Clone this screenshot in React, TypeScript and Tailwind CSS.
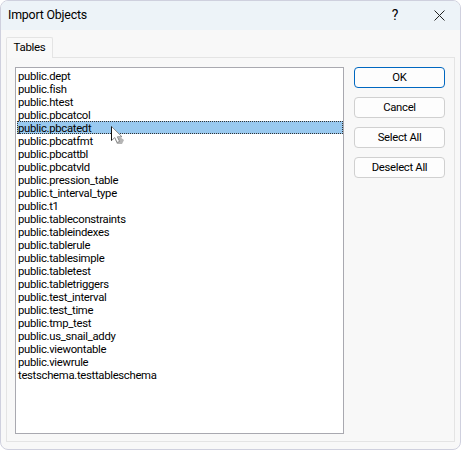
const tables = [
  'public.dept',
  'public.fish',
  'public.htest',
  'public.pbcatcol',
  'public.pbcatedt',
  'public.pbcatfmt',
  'public.pbcattbl',
  'public.pbcatvld',
  'public.pression_table',
  'public.t_interval_type',
  'public.t1',
  'public.tableconstraints',
  'public.tableindexes',
  'public.tablerule',
  'public.tablesimple',
  'public.tabletest',
  'public.tabletriggers',
  'public.test_interval',
  'public.test_time',
  'public.tmp_test',
  'public.us_snail_addy',
  'public.viewontable',
  'public.viewrule',
  'testschema.testtableschema',
]

const buttons = ['OK', 'Cancel', 'Select All', 'Deselect All']

export default function App() {
  return (
    <div className="relative h-[450px] w-[461px] overflow-hidden bg-white font-['Roboto',sans-serif] text-[11.3px] tracking-[-0.3px] text-black">
      <div className="flex h-full flex-col overflow-hidden rounded-[8px] border border-[#cfd0de] bg-[#f8f8f8]">
        {/* Title bar */}
        <div className="flex h-[29px] shrink-0 items-center bg-[#edf3f8] pl-[7px]">
          <span className="flex-1 text-[12.4px] tracking-[-0.2px]">Import Objects</span>
          <span className="mr-[36px] text-[14px]">?</span>
          <svg width="11" height="11" viewBox="0 0 11 11" className="mr-[15px]">
            <path d="M0.5 0.5 L10.5 10.5 M10.5 0.5 L0.5 10.5" stroke="#222" strokeWidth="1" fill="none" />
          </svg>
        </div>

        <div className="flex flex-1 flex-col px-[5px] pt-[7px] pb-[7px]">
          {/* Tab */}
          <div className="relative z-10 -mb-px flex h-[21px] w-[47px] items-center justify-center rounded-t-[2px] border border-b-0 border-[#e4e4e4] bg-[#f9f9f9] text-[11.5px]">
            Tables
          </div>

          {/* Pane */}
          <div className="flex flex-1 gap-[10px] border border-[#e4e4e4] bg-[#f8f8f8] pt-[9px] pr-[6px] pb-[7px] pl-[8px]">
            <div className="flex h-full w-[329px] flex-col border border-[#a9a9b0] bg-white pt-[1px] pl-[1px] leading-[15px]">
              {tables.map((t) =>
                t === 'public.pbcatedt' ? (
                  <div key={t} className="h-[13px] shrink-0 whitespace-nowrap bg-[#99c9ef] pl-[1px] outline-1 -outline-offset-1 outline-dotted outline-[#333]">
                    {t}
                  </div>
                ) : (
                  <div key={t} className="h-[13px] shrink-0 whitespace-nowrap pl-[1px]">
                    {t}
                  </div>
                ),
              )}
            </div>

            <div className="flex w-[91px] flex-col gap-[9px]">
              {buttons.map((b) => (
                <button
                  key={b}
                  className={
                    b === 'OK'
                      ? 'h-[21px] rounded-[4px] border border-[#0067c0] bg-[#fdfdfd] leading-none'
                      : 'h-[21px] rounded-[4px] border border-[#d0d0d0] bg-[#fdfdfd] leading-none'
                  }
                >
                  {b}
                </button>
              ))}
            </div>
          </div>
        </div>
      </div>

      {/* Mouse pointer */}
      <svg width="16" height="20" viewBox="0 0 16 20" className="absolute left-[111px] top-[126px]">
        <path d="M4 13 L6 18 L11 18 L13 14 L9 11 Z" fill="#b5b5b5" />
        <path d="M0.5 0.5 L0.5 14.5 L3.8 11.6 L6 16.5 L8.6 15.5 L6.4 10.8 L11 10.8 Z" fill="#fff" stroke="#8a8a8a" strokeWidth="1" />
        <path d="M0.5 0.5 L0.5 14.5" stroke="#111" strokeWidth="1" fill="none" />
      </svg>
    </div>
  )
}
